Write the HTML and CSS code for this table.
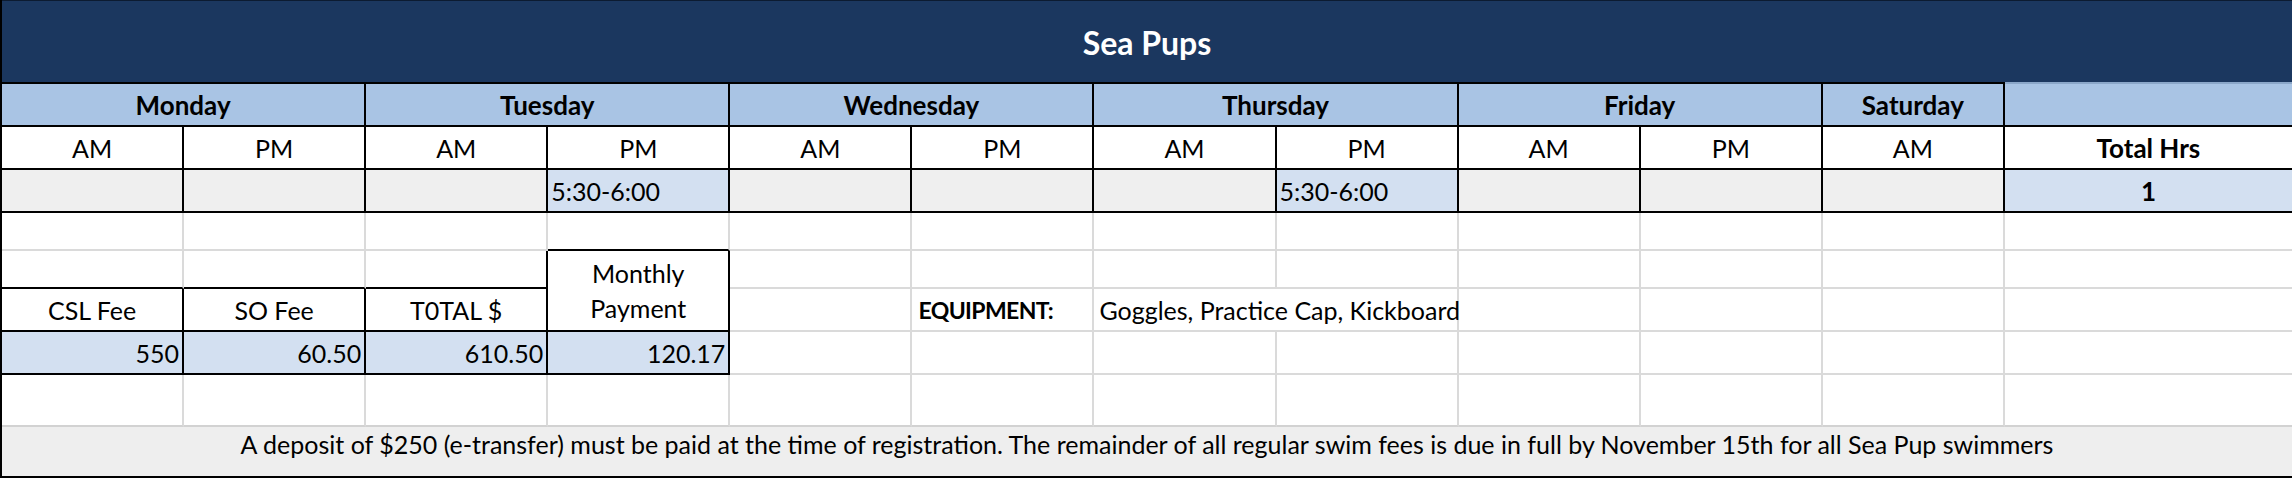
FILE: index.html
```html
<!DOCTYPE html>
<html lang="en">
<head>
<meta charset="utf-8">
<title>Sea Pups</title>
<link rel="stylesheet" href="styles.css">
</head>
<body>
<div class="sheet">
  <div class="title">Sea Pups</div>

  <div class="c day s2">Monday</div>
  <div class="c day s2">Tuesday</div>
  <div class="c day s2">Wednesday</div>
  <div class="c day s2">Thursday</div>
  <div class="c day s2">Friday</div>
  <div class="c day">Saturday</div>
  <div class="c day last"></div>

  <div class="c k">AM</div>
  <div class="c k">PM</div>
  <div class="c k">AM</div>
  <div class="c k">PM</div>
  <div class="c k">AM</div>
  <div class="c k">PM</div>
  <div class="c k">AM</div>
  <div class="c k">PM</div>
  <div class="c k">AM</div>
  <div class="c k">PM</div>
  <div class="c k">AM</div>
  <div class="c k last bold">Total Hrs</div>

  <div class="c k grey"></div>
  <div class="c k grey"></div>
  <div class="c k grey"></div>
  <div class="c k blue left">5:30-6:00</div>
  <div class="c k grey"></div>
  <div class="c k grey"></div>
  <div class="c k grey"></div>
  <div class="c k blue left">5:30-6:00</div>
  <div class="c k grey"></div>
  <div class="c k grey"></div>
  <div class="c k grey"></div>
  <div class="c k last blue bold">1</div>

  <div class="c"></div>
  <div class="c"></div>
  <div class="c"></div>
  <div class="c kb"></div>
  <div class="c"></div>
  <div class="c"></div>
  <div class="c"></div>
  <div class="c"></div>
  <div class="c"></div>
  <div class="c"></div>
  <div class="c"></div>
  <div class="c last"></div>

  <div class="c kb"></div>
  <div class="c kb"></div>
  <div class="c k"></div>
  <div class="c k monthly">Monthly<br>Payment</div>
  <div class="c"></div>
  <div class="c"></div>
  <div class="c"></div>
  <div class="c"></div>
  <div class="c"></div>
  <div class="c"></div>
  <div class="c"></div>
  <div class="c last"></div>

  <div class="c k">CSL Fee</div>
  <div class="c k">SO Fee</div>
  <div class="c k">T0TAL $</div>
  <div class="c"></div>
  <div class="c left equip">EQUIPMENT:</div>
  <div class="c left pad s2">Goggles, Practice Cap, Kickboard</div>
  <div class="c"></div>
  <div class="c"></div>
  <div class="c"></div>
  <div class="c last"></div>

  <div class="c k blue right">550</div>
  <div class="c k blue right">60.50</div>
  <div class="c k blue right">610.50</div>
  <div class="c k blue right">120.17</div>
  <div class="c"></div>
  <div class="c"></div>
  <div class="c"></div>
  <div class="c"></div>
  <div class="c"></div>
  <div class="c"></div>
  <div class="c"></div>
  <div class="c last"></div>

  <div class="c dk"></div>
  <div class="c dk"></div>
  <div class="c dk"></div>
  <div class="c dk"></div>
  <div class="c dk"></div>
  <div class="c dk"></div>
  <div class="c dk"></div>
  <div class="c dk"></div>
  <div class="c dk"></div>
  <div class="c dk"></div>
  <div class="c dk"></div>
  <div class="c dk last"></div>

  <div class="footer">A deposit of $250 (e-transfer) must be paid at the time of registration. The remainder of all regular swim fees is due in full by November 15th for all Sea Pup swimmers</div>
</div>
</body>
</html>
```
FILE: styles.css
```css
html, body {
  margin: 0;
  padding: 0;
  background: #ffffff;
}

body {
  font-family: "Lato", "Liberation Sans", sans-serif;
  font-size: 25px;
  color: #000;
}

.sheet {
  width: 2292px;
  height: 478px;
  box-sizing: border-box;
  display: grid;
  grid-template-columns: repeat(11, 182.09px) 1fr;
  grid-template-rows: 82px 45px 43px 43px 38px 38px 43px 43px 52px 51px;
  border-left: 2px solid #000;
  overflow: hidden;
}

.title {
  grid-column: 1 / -1;
  background: #1b375f;
  border-top: 1px solid #0c1b31;
  color: #fff;
  font-weight: 700;
  font-size: 32px;
  display: flex;
  align-items: center;
  justify-content: center;
  padding-top: 2px;
  box-sizing: border-box;
}

.c {
  box-sizing: border-box;
  border-right: 2px solid #dadada;
  border-bottom: 2px solid #dadada;
  display: flex;
  align-items: center;
  justify-content: center;
  white-space: nowrap;
  overflow: visible;
  min-width: 0;
}

.s2 { grid-column: span 2; }

.k { border-right-color: #000; border-bottom-color: #000; }
.kb { border-bottom-color: #000; }
.dk { border-bottom-color: #d2d2d2; }
.last { border-right: none; }

.day {
  background: #a9c4e4;
  border-top: 2px solid #000;
  border-right-color: #000;
  border-bottom-color: #000;
  font-weight: 700;
  font-size: 26px;
}

.day.last {
  border-top-color: #8ba7c9;
}

.bold { font-weight: 700; font-size: 26px; }

.grey { background: #efefef; }
.blue { background: #d3e0f1; }

.left { justify-content: flex-start; padding-left: 3px; }
.right { justify-content: flex-end; padding-right: 3px; }

.equip {
  font-weight: 700;
  font-size: 23px;
  letter-spacing: -0.6px;
  padding-left: 6px;
}

.pad { padding-left: 5px; }

.monthly {
  grid-row: span 2;
  flex-direction: column;
  line-height: 35px;
  text-align: center;
}

.footer {
  grid-column: 1 / -1;
  background: #eeeeee;
  border-bottom: 2px solid #000;
  box-sizing: border-box;
  text-align: center;
  line-height: 24px;
  padding-top: 5px;
  white-space: nowrap;
}
```
